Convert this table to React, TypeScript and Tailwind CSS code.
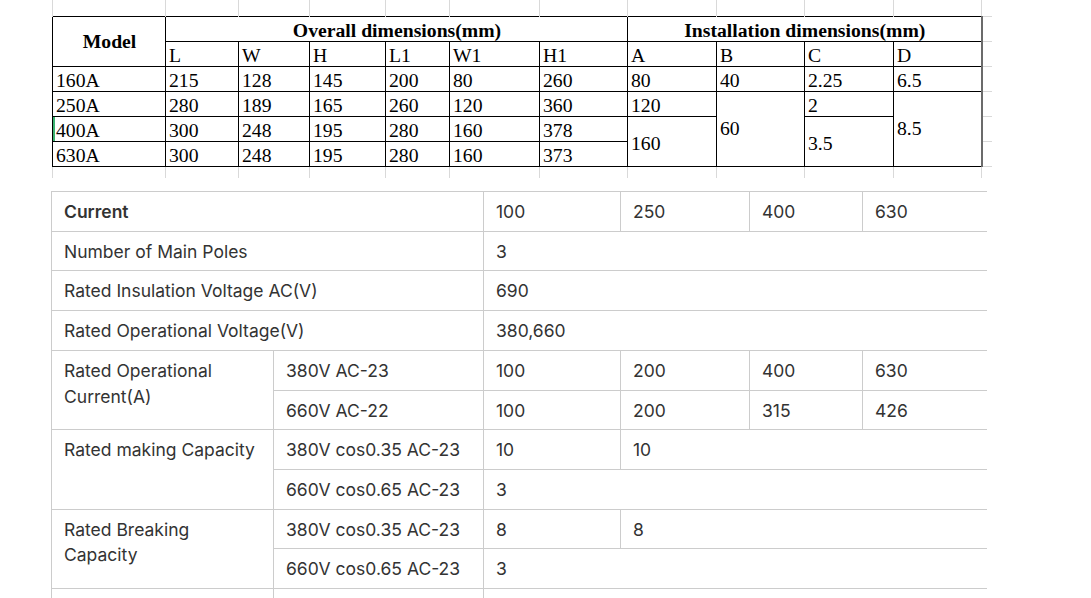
import React from 'react';

const serif = { fontFamily: '"Liberation Serif", "Times New Roman", serif' };
const sans = { fontFamily: 'Inter, "Noto Sans", Arial, sans-serif' };

const topCols = [113, 73, 71, 76, 64, 90, 88, 89, 88, 89, 88];

const TopCell = ({ children, className = '', ...rest }: any) => (
    <td
        {...rest}
        className={`border border-black pl-[3px] pr-[2px] h-[25px] leading-[20px] align-bottom pb-[1px] ${className}`}
    >
        {children}
    </td>
);

const DimensionSheet = () => {
    const rows = [
        ['160A', '215', '128', '145', '200', '80', '260'],
        ['250A', '280', '189', '165', '260', '120', '360'],
        ['400A', '300', '248', '195', '280', '160', '378'],
        ['630A', '300', '248', '195', '280', '160', '373'],
    ];

    return (
        <table className="border-collapse table-fixed text-[19.7px] text-black ml-[1px]" style={serif}>
            <colgroup>
                {topCols.map((w, i) => <col key={i} style={{ width: w }} />)}
                <col style={{ width: 10 }} />
            </colgroup>
            <tbody>
                {/* excel gridlines above the range */}
                <tr>
                    {topCols.map((_, i) => (
                        <td key={i} className={`h-[16px] border-l border-[#d9d9d9] ${i === topCols.length - 1 ? 'border-r' : ''}`} />
                    ))}
                    <td />
                </tr>
                <tr>
                    <TopCell rowSpan={2} className="text-center font-bold align-middle pb-0">Model</TopCell>
                    <TopCell colSpan={6} className="text-center font-bold">Overall dimensions(mm)</TopCell>
                    <TopCell colSpan={4} className="text-center font-bold border-r-2 border-r-[#6b6b6b]">Installation dimensions(mm)</TopCell>
                    <td className="border-t border-[#d9d9d9]" />
                </tr>
                <tr>
                    {['L', 'W', 'H', 'L1', 'W1', 'H1', 'A', 'B', 'C'].map(h => <TopCell key={h}>{h}</TopCell>)}
                    <TopCell className="border-r-2 border-r-[#6b6b6b]">D</TopCell>
                    <td className="border-t border-[#d9d9d9]" />
                </tr>
                <tr>
                    {rows[0].map((v, i) => <TopCell key={i}>{v}</TopCell>)}
                    <TopCell>80</TopCell>
                    <TopCell>40</TopCell>
                    <TopCell>2.25</TopCell>
                    <TopCell className="border-r-2 border-r-[#6b6b6b]">6.5</TopCell>
                    <td className="border-t border-[#d9d9d9]" />
                </tr>
                <tr>
                    {rows[1].map((v, i) => <TopCell key={i}>{v}</TopCell>)}
                    <TopCell>120</TopCell>
                    <TopCell rowSpan={3} className="align-middle pb-0">60</TopCell>
                    <TopCell>2</TopCell>
                    <TopCell rowSpan={3} className="align-middle pb-0 border-r-2 border-r-[#6b6b6b]">8.5</TopCell>
                    <td className="border-t border-[#d9d9d9]" />
                </tr>
                <tr>
                    {rows[2].map((v, i) => (
                        <TopCell key={i} className={i === 0 ? 'shadow-[inset_2px_0_0_#3cb371]' : ''}>{v}</TopCell>
                    ))}
                    <TopCell rowSpan={2} className="align-middle pt-[4px] pb-0">160</TopCell>
                    <TopCell rowSpan={2} className="align-middle pt-[4px] pb-0">3.5</TopCell>
                    <td className="border-t border-[#d9d9d9]" />
                </tr>
                <tr>
                    {rows[3].map((v, i) => <TopCell key={i}>{v}</TopCell>)}
                    <td className="border-t border-[#d9d9d9]" />
                </tr>
                <tr>
                    {topCols.map((_, i) => (
                        <td key={i} className={`h-[12px] border-l border-t border-[#d9d9d9] border-t-black ${i === topCols.length - 1 ? 'border-r' : ''}`} />
                    ))}
                    <td className="border-t border-[#d9d9d9]" />
                </tr>
            </tbody>
        </table>
    );
};

const specCols = [222, 210, 137, 129, 113, 124];

const Cell = ({ children, className = '', last = false, ...rest }: any) => (
    <td
        {...rest}
        className={`border border-[#cccccc] ${last ? 'border-r-0' : ''} px-3 pt-[7px] pb-[6px] align-top leading-[25.7px] ${className}`}
    >
        {children}
    </td>
);

const SpecTable = () => (
    <table className="border-collapse table-fixed text-[17.5px] text-[#333333] mt-[13px]" style={sans}>
        <colgroup>
            {specCols.map((w, i) => <col key={i} style={{ width: w }} />)}
        </colgroup>
        <tbody>
            <tr>
                <Cell colSpan={2} className="font-semibold">Current</Cell>
                <Cell>100</Cell>
                <Cell>250</Cell>
                <Cell>400</Cell>
                <Cell last>630</Cell>
            </tr>
            <tr>
                <Cell colSpan={2}>Number of Main Poles</Cell>
                <Cell colSpan={4} last>3</Cell>
            </tr>
            <tr>
                <Cell colSpan={2}>Rated Insulation Voltage AC(V)</Cell>
                <Cell colSpan={4} last>690</Cell>
            </tr>
            <tr>
                <Cell colSpan={2}>Rated Operational Voltage(V)</Cell>
                <Cell colSpan={4} last>380,660</Cell>
            </tr>
            <tr>
                <Cell rowSpan={2}>Rated Operational Current(A)</Cell>
                <Cell>380V AC-23</Cell>
                <Cell>100</Cell>
                <Cell>200</Cell>
                <Cell>400</Cell>
                <Cell last>630</Cell>
            </tr>
            <tr>
                <Cell>660V AC-22</Cell>
                <Cell>100</Cell>
                <Cell>200</Cell>
                <Cell>315</Cell>
                <Cell last>426</Cell>
            </tr>
            <tr>
                <Cell rowSpan={2}>Rated making Capacity</Cell>
                <Cell>380V cos0.35 AC-23</Cell>
                <Cell>10</Cell>
                <Cell colSpan={3} last>10</Cell>
            </tr>
            <tr>
                <Cell>660V cos0.65 AC-23</Cell>
                <Cell colSpan={4} last>3</Cell>
            </tr>
            <tr>
                <Cell rowSpan={2}>Rated Breaking Capacity</Cell>
                <Cell>380V cos0.35 AC-23</Cell>
                <Cell>8</Cell>
                <Cell colSpan={3} last>8</Cell>
            </tr>
            <tr>
                <Cell>660V cos0.65 AC-23</Cell>
                <Cell colSpan={4} last>3</Cell>
            </tr>
            <tr>
                <Cell>&nbsp;</Cell>
                <Cell>&nbsp;</Cell>
                <Cell colSpan={4} last>&nbsp;</Cell>
            </tr>
        </tbody>
    </table>
);

export default function App() {
    return (
        <div className="min-h-screen bg-white pl-[51px]">
            <DimensionSheet />
            <SpecTable />
        </div>
    );
}
